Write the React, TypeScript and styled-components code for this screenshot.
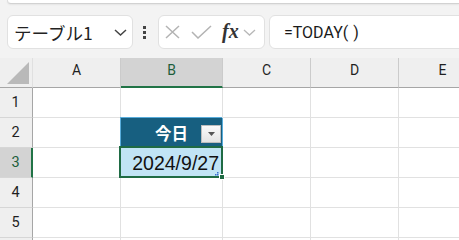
import React from 'react';
import styled, { createGlobalStyle } from 'styled-components';

const GlobalStyle = createGlobalStyle`
  html, body { margin: 0; padding: 0; background: #f3f3f3; }
  body { font-family: Roboto, "Noto Sans CJK JP", sans-serif; }
  * { box-sizing: border-box; }
`;

const Page = styled.div`
  width: 459px;
  height: 240px;
  overflow: hidden;
  background: #f3f3f3;
`;

const Ribbon = styled.div`
  height: 4px;
  margin-left: 7px;
  background: #fff;
  border-left: 1px solid #dcdcdc;
  border-bottom: 1px solid #d2d2d2;
  border-bottom-left-radius: 6px;
  box-shadow: 0 1px 2px rgba(0, 0, 0, 0.06);
`;

const FormulaBar = styled.div`
  display: flex;
  align-items: center;
  height: 34px;
  margin-top: 11px;
  padding-left: 7px;
`;

const Field = styled.div<{ $width: number; $gap?: number }>`
  flex: none;
  width: ${(p) => p.$width}px;
  height: 34px;
  margin-left: ${(p) => p.$gap ?? 0}px;
  display: flex;
  align-items: center;
  background: #fff;
  border: 1px solid #e1e1e1;
  border-radius: 6px;
`;

const NameText = styled.span`
  padding-left: 6px;
  font-family: "Noto Sans CJK JP", sans-serif;
  font-size: 17.5px;
  color: #222;
  flex: 1;
`;

const Chevron = styled.svg<{ $right?: number }>`
  flex: none;
  margin-right: ${(p) => p.$right ?? 0}px;
`;

const Dots = styled.div`
  flex: none;
  margin-left: 10px;
  display: flex;
  flex-direction: column;
  gap: 2px;
`;

const Dot = styled.span`
  width: 3px;
  height: 3px;
  background: #444;
`;

const IconSlot = styled.span<{ $left: number }>`
  display: flex;
  align-items: center;
  margin-left: ${(p) => p.$left}px;
`;

const Fx = styled.span`
  font-family: "Liberation Serif", serif;
  font-style: italic;
  font-weight: bold;
  font-size: 20px;
  color: #333;
  line-height: 1;
  margin-top: -2px;
`;

const FormulaText = styled.span`
  padding-left: 14px;
  font-family: Roboto, sans-serif;
  font-size: 16px;
  color: #1a1a1a;
  white-space: nowrap;
`;

const Paren = styled.span`
  letter-spacing: 5px;
`;

const Sheet = styled.div`
  margin-top: 9px;
  display: grid;
  grid-template-columns: 33px 88px 102px 88px 88px 88px;
  grid-auto-rows: 30px;
  background: #fff;
`;

const Corner = styled.div`
  background: #efefef;
  border-bottom: 1px solid #a6a6a6;
  border-right: 1px solid #e0e0e0;
  display: flex;
  align-items: flex-end;
  justify-content: flex-end;
  padding: 0 3px 3px 0;
`;

const ColHeader = styled.div<{ $selected?: boolean }>`
  background: ${(p) => (p.$selected ? '#d3d3d3' : '#efefef')};
  border-right: 1px solid #cbcbcb;
  border-bottom: ${(p) => (p.$selected ? '2px solid #217346' : '1px solid #a6a6a6')};
  display: flex;
  align-items: center;
  justify-content: center;
  padding-bottom: ${(p) => (p.$selected ? 4 : 5)}px;
  font-size: 14px;
  color: ${(p) => (p.$selected ? '#1d5e3b' : '#1f1f1f')};
`;

const RowHeader = styled.div<{ $selected?: boolean }>`
  background: ${(p) => (p.$selected ? '#d3d3d3' : '#efefef')};
  border-right: ${(p) => (p.$selected ? '2px solid #217346' : '1px solid #a6a6a6')};
  border-bottom: 1px solid #d6d6d6;
  display: flex;
  align-items: center;
  justify-content: center;
  padding-right: ${(p) => (p.$selected ? 0 : 1)}px;
  font-size: 14.5px;
  color: ${(p) => (p.$selected ? '#1d5e3b' : '#1f1f1f')};
`;

const Cell = styled.div`
  border-right: 1px solid #e1e1e1;
  border-bottom: 1px solid #e1e1e1;
`;

const TableHead = styled.div`
  background: #175f80;
  border-right: 1px solid #58acdb;
  box-shadow: -1px -1px 0 0 #58acdb;
  display: flex;
  align-items: center;
  justify-content: flex-end;
  padding-right: 1px;
  gap: 13px;
`;

const HeadText = styled.span`
  font-family: "Noto Sans CJK JP", sans-serif;
  font-weight: bold;
  font-size: 16.5px;
  color: #fff;
  margin-top: -1px;
`;

const FilterButton = styled.span`
  width: 20px;
  height: 18px;
  margin-top: 2px;
  background: linear-gradient(#fafafa, #e4e4e4);
  border: 1px solid #bdbdbd;
  display: flex;
  align-items: center;
  justify-content: center;
`;

const ActiveCell = styled.div`
  position: relative;
  background: #c1e4f5;
  border-right: 1px solid #e1e1e1;
  border-bottom: 1px solid #e1e1e1;
  display: flex;
  align-items: center;
  justify-content: flex-end;
  padding: 1px 3px 0 0;
  font-family: "Liberation Sans", Arial, sans-serif;
  font-size: 19.5px;
  color: #111;
`;

const ActiveFrame = styled.span`
  position: absolute;
  left: -2px;
  top: -2px;
  right: -1px;
  bottom: -1px;
  border: 2px solid #1f6b44;
  pointer-events: none;
`;

const FillHandle = styled.span`
  position: absolute;
  right: -3px;
  bottom: -3px;
  width: 6px;
  height: 6px;
  background: #1f6b44;
  border: 1px solid #fff;
`;

const ResizeMark = styled.svg`
  position: absolute;
  right: 3px;
  bottom: 1px;
`;

const cols = ['A', 'B', 'C', 'D', 'E'];
const rows = [1, 2, 3, 4, 5, 6];

export default function App() {
  return (
    <Page>
      <GlobalStyle />
      <Ribbon />
      <FormulaBar>
        <Field $width={126}>
          <NameText>テーブル1</NameText>
          <Chevron $right={5} width="13" height="7" viewBox="0 0 13 7">
            <polyline points="1,1 6.5,6 12,1" fill="none" stroke="#444" strokeWidth="1.5" />
          </Chevron>
        </Field>
        <Dots>
          <Dot />
          <Dot />
          <Dot />
        </Dots>
        <Field $width={107} $gap={12}>
          <IconSlot $left={6}>
            <svg width="15" height="14" viewBox="0 0 15 14">
              <path d="M1 1 L14 13 M14 1 L1 13" stroke="#b3b3b3" strokeWidth="1.5" fill="none" />
            </svg>
          </IconSlot>
          <IconSlot $left={11}>
            <svg width="21" height="14" viewBox="0 0 21 14">
              <polyline points="1,7 7,13 20,1" stroke="#b3b3b3" strokeWidth="1.5" fill="none" />
            </svg>
          </IconSlot>
          <IconSlot $left={10}>
            <Fx>fx</Fx>
          </IconSlot>
          <IconSlot $left={4}>
            <svg width="13" height="7" viewBox="0 0 13 7">
              <polyline points="1,1 6.5,6 12,1" fill="none" stroke="#b8b8b8" strokeWidth="1.3" />
            </svg>
          </IconSlot>
        </Field>
        <Field $width={230} $gap={4}>
          <FormulaText>
            =TODAY<Paren>(</Paren>)
          </FormulaText>
        </Field>
      </FormulaBar>
      <Sheet>
        <Corner>
          <svg width="22" height="22" viewBox="0 0 22 22">
            <polygon points="22,0 22,22 0,22" fill="#b9b9b9" />
          </svg>
        </Corner>
        {cols.map((c) => (
          <ColHeader key={c} $selected={c === 'B'}>
            {c}
          </ColHeader>
        ))}
        {rows.map((r) => (
          <React.Fragment key={r}>
            <RowHeader $selected={r === 3}>{r < 6 ? r : null}</RowHeader>
            {cols.map((c) => {
              if (r === 2 && c === 'B') {
                return (
                  <TableHead key={c}>
                    <HeadText>今日</HeadText>
                    <FilterButton>
                      <svg width="7" height="4" viewBox="0 0 7 4">
                        <polygon points="0,0 7,0 3.5,4" fill="#555" />
                      </svg>
                    </FilterButton>
                  </TableHead>
                );
              }
              if (r === 3 && c === 'B') {
                return (
                  <ActiveCell key={c}>
                    2024/9/27
                    <ActiveFrame />
                    <ResizeMark width="4" height="4" viewBox="0 0 4 4">
                      <rect x="2" y="0" width="1.5" height="1.5" fill="#3b6fd0" />
                      <rect x="0" y="2" width="1.5" height="1.5" fill="#3b6fd0" />
                      <rect x="2" y="2" width="1.5" height="1.5" fill="#3b6fd0" />
                    </ResizeMark>
                    <FillHandle />
                  </ActiveCell>
                );
              }
              return <Cell key={c} />;
            })}
          </React.Fragment>
        ))}
      </Sheet>
    </Page>
  );
}
